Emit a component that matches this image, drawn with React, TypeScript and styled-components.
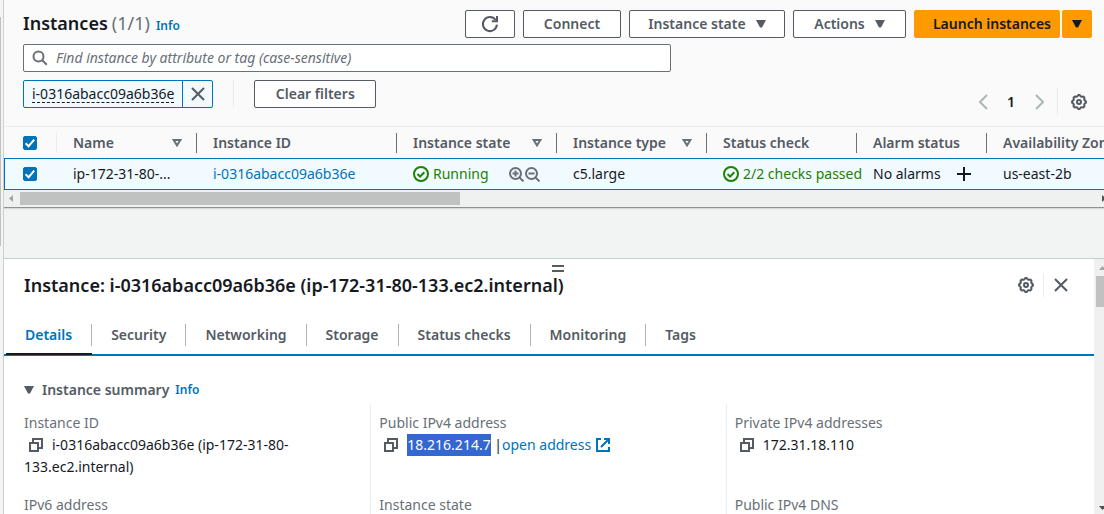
import React from "react";
import styled, { createGlobalStyle } from "styled-components";

const GlobalStyle = createGlobalStyle`
  *, *::before, *::after { box-sizing: border-box; }
  body {
    margin: 0;
    background: #fafafa;
    color: #16191f;
    font-family: "Noto Sans", "Open Sans", sans-serif;
    font-size: 14px;
    line-height: 22px;
  }
  button, input { font: inherit; color: inherit; }
  h1, h2, h3, dl, dd { margin: 0; font-size: inherit; }
  svg { display: block; flex: none; }
`;

const Page = styled.div`
  display: flex;
  height: 100vh;
  overflow: hidden;
`;

const PageEdge = styled.div`
  flex: none;
  width: 3px;
  padding-top: 17px;
  background: #f4f4f4;
`;

const PageEdgeThumb = styled.div`
  width: 1px;
  height: 229px;
  background: #c1c1c1;
`;

const Main = styled.main`
  flex: 1;
  min-width: 0;
  display: flex;
  flex-direction: column;
  border-left: 1px solid #c9cfcf;
  background: #f2f3f3;
`;

const TableCard = styled.section`
  flex: none;
  background: #fafafa;
  border-bottom: 1px solid #879596;
  box-shadow: 0 1px 1px #d5dbdb;
`;

const Toolbar = styled.header`
  padding: 10px 12px 6px 19px;
  display: flex;
  justify-content: space-between;
  align-items: center;
`;

const Title = styled.h1`
  display: flex;
  align-items: baseline;
  font-size: 18px;
  font-weight: 600;
`;

const Counter = styled.span`
  margin-left: 4px;
  color: #687078;
  font-weight: 400;
`;

const Link = styled.a`
  color: #0073bb;
  text-decoration: none;
`;

const InfoLink = styled(Link)`
  margin-left: 6px;
  font-size: 12px;
  font-weight: 600;
`;

const Buttons = styled.div`
  display: flex;
  gap: 8px;
`;

const Button = styled.button<{ $width?: number }>`
  display: flex;
  align-items: center;
  justify-content: center;
  gap: 10px;
  height: 28px;
  min-width: ${(p) => (p.$width ? `${p.$width}px` : "0")};
  padding: 0;
  border: 1px solid #545b64;
  border-radius: 2px;
  background: #fff;
  color: #545b64;
  font-weight: 600;
  white-space: nowrap;
`;

const SplitButton = styled.div`
  display: flex;
  gap: 2px;
`;

const PrimaryButton = styled(Button)`
  border-color: #ff9900;
  background: #ff9900;
  color: #16191f;
`;

const LaunchButton = styled(PrimaryButton)`
  justify-content: flex-end;
  padding-right: 8px;
`;

const Filters = styled.div`
  display: flex;
  justify-content: space-between;
  padding: 0 4px 10px 19px;
  border-bottom: 1px solid #eaeded;
`;

const FilterColumn = styled.div`
  flex: 0 1 648px;
  display: flex;
  flex-direction: column;
  gap: 8px;
  padding-bottom: 8px;
`;

const SearchBox = styled.label`
  display: flex;
  align-items: center;
  gap: 8px;
  height: 28px;
  padding: 0 8px;
  border: 1px solid #687078;
  border-radius: 2px;
  background: #fff;
`;

const SearchInput = styled.input`
  flex: 1;
  min-width: 0;
  border: 0;
  padding: 0;
  outline: 0;
  background: transparent;
  &::placeholder {
    color: #687078;
    font-style: italic;
    opacity: 1;
  }
`;

const TokenRow = styled.div`
  display: flex;
  gap: 20px;
`;

const Token = styled.div`
  display: flex;
  height: 28px;
  border: 1px solid #0073bb;
  border-radius: 2px;
  background: #f1faff;
`;

const TokenText = styled.button`
  padding: 0 8px;
  border: 0;
  background: none;
  span {
    display: block;
    line-height: 17px;
    border-bottom: 1px dashed #16191f;
  }
`;

const TokenRemove = styled.button`
  width: 30px;
  display: grid;
  place-items: center;
  padding: 0;
  border: 0;
  border-left: 1px solid #0073bb;
  background: none;
  color: #545b64;
`;

const Divider = styled.div<{ $height: number }>`
  width: 1px;
  height: ${(p) => p.$height}px;
  background: #eaeded;
`;

const Pager = styled.nav`
  align-self: flex-end;
  display: flex;
  align-items: center;
  height: 28px;
  ${Divider} { margin-left: 9px; }
`;

const IconButton = styled.button<{ $width?: number }>`
  display: grid;
  place-items: center;
  width: ${(p) => p.$width ?? 26}px;
  height: 24px;
  padding: 0;
  border: 0;
  background: none;
  color: #545b64;
  &:disabled { color: #aab7b8; }
`;

const PageNumber = styled.button`
  width: 38px;
  padding: 0;
  border: 0;
  background: none;
  font-weight: 600;
`;

const TableScroller = styled.div`
  overflow: hidden;
`;

const Table = styled.table`
  width: 100%;
  min-width: 1160px;
  table-layout: fixed;
  border-collapse: separate;
  border-spacing: 0;
`;

const Th = styled.th`
  height: 31px;
  padding: 0;
  text-align: left;
  color: #545b64;
  font-weight: 600;
  line-height: 20px;
  white-space: nowrap;
`;

const HeadInner = styled.div<{ $light?: boolean }>`
  display: flex;
  align-items: center;
  justify-content: space-between;
  height: 20px;
  padding: 0 14px 0 16px;
  border-right: 1px solid ${(p) => (p.$light ? "#eaeded" : "#687078")};
`;

const Td = styled.td`
  height: 32px;
  padding: 0 0 0 16px;
  border-top: 1px solid #0073bb;
  border-bottom: 1px solid #0073bb;
  background: #f1faff;
  white-space: nowrap;
  &:first-child { border-left: 1px solid #0073bb; }
`;

const CellRow = styled.div<{ $gap: number; $color?: string }>`
  display: flex;
  align-items: center;
  gap: ${(p) => p.$gap}px;
  color: ${(p) => p.$color ?? "inherit"};
`;

const ZoomPair = styled.div`
  display: flex;
  gap: 1px;
  margin-left: 16px;
  color: #687078;
`;

const BareButton = styled.button`
  padding: 0;
  border: 0;
  background: none;
`;

const CheckWrap = styled.label<{ $pad: number }>`
  display: grid;
  width: 14px;
  margin-left: ${(p) => p.$pad}px;
  & > * { grid-area: 1 / 1; }
  svg { pointer-events: none; }
`;

const CheckInput = styled.input`
  appearance: none;
  width: 14px;
  height: 14px;
  margin: 0;
  border: 1px solid #0073bb;
  border-radius: 2px;
  background: #0073bb;
`;

const HScroll = styled.div`
  display: flex;
  align-items: center;
  height: 17px;
  overflow: hidden;
  background: #f0f0f0;
`;

const HThumb = styled.div`
  width: 40%;
  height: 13px;
  background: #c1c1c1;
`;

const HEnd = styled.div`
  width: 2px;
  margin-left: auto;
  overflow: hidden;
`;

const SplitPanel = styled.section`
  flex: 1;
  min-height: 0;
  display: flex;
  margin-top: 50px;
  border-top: 1px solid #c9cfcf;
  background: #fff;
`;

const PanelBody = styled.div`
  flex: 1;
  min-width: 0;
  overflow: hidden;
`;

const HandleRow = styled.div`
  display: flex;
  justify-content: center;
  padding: 6px 0 0 18px;
`;

const Handle = styled.button`
  width: 12px;
  height: 7px;
  padding: 0;
  border: 0;
  border-top: 2px solid #545b64;
  border-bottom: 2px solid #545b64;
  background: none;
`;

const PanelHeader = styled.header`
  display: flex;
  align-items: center;
  justify-content: space-between;
  height: 26px;
  padding: 0 16px 0 20px;
`;

const PanelTitle = styled.h2`
  font-size: 18px;
  font-weight: 600;
  white-space: nowrap;
`;

const PanelActions = styled.div`
  display: flex;
  align-items: center;
`;

const Tabs = styled.div`
  display: flex;
  height: 58px;
  padding: 0 2px;
  border-bottom: 2px solid #0073bb;
`;

const Tab = styled.button<{ $active?: boolean }>`
  display: flex;
  align-items: center;
  padding: 18px 0 0;
  margin-bottom: -1px;
  border: 0;
  border-bottom: 2px solid ${(p) => (p.$active ? "#16191f" : "transparent")};
  background: none;
  color: ${(p) => (p.$active ? "#0073bb" : "#545b64")};
  font-weight: 600;
  white-space: nowrap;
  span {
    padding: 0 19px;
    border-right: 1px solid #aab7b8;
  }
  &:last-child span { border-right: 0; }
`;

const SummaryTitle = styled.h3`
  display: flex;
  align-items: center;
  padding: 23px 20px 3px;
  color: #545b64;
  font-weight: 600;
`;

const SummaryToggle = styled.button`
  display: flex;
  align-items: center;
  gap: 8px;
  padding: 0;
  border: 0;
  background: none;
  font-weight: 600;
`;

const Summary = styled.dl`
  display: grid;
  grid-template-columns: repeat(3, 1fr);
  margin: 0 13px 0 11px;
`;

const Cell = styled.div<{ $first?: boolean }>`
  min-height: 82px;
  padding: 8px;
  border-left: 1px solid ${(p) => (p.$first ? "transparent" : "#eaeded")};
`;

const Term = styled.dt`
  color: #687078;
`;

const Value = styled.dd`
  color: #16191f;
`;

const CopyButton = styled.button`
  display: inline-block;
  vertical-align: -2px;
  margin: 0 9px 0 5px;
  padding: 0;
  border: 0;
  background: none;
  line-height: 0;
  color: #545b64;
`;

const Selected = styled.span`
  display: inline-block;
  background: #3367d1;
  color: #fff;
`;

const OpenLink = styled(Link)`
  svg {
    display: inline-block;
    vertical-align: -2px;
    margin-left: 5px;
  }
`;

const VScroll = styled.div`
  flex: none;
  width: 10px;
  display: flex;
  flex-direction: column;
  overflow: hidden;
  background: #f0f0f0;
`;

const VThumb = styled.div`
  height: 31px;
  margin-left: 2px;
  background: #c1c1c1;
`;

const VEnd = styled.div`
  margin-top: auto;
`;

const CaretDown = () => (
  <svg width="10" height="8" viewBox="0 0 10 8"><path d="M0 0h10L6 7.4H4z" fill="currentColor" /></svg>
);

const SortIcon = () => (
  <svg width="10" height="8" viewBox="0 0 10 8" fill="none" stroke="#687078" strokeWidth="2">
    <path d="M1.6 1h6.8L5 6.4z" />
  </svg>
);

const Refresh = () => (
  <svg width="18" height="18" viewBox="0 0 18 18" fill="none" stroke="currentColor" strokeWidth="2">
    <path d="M15.9 9.6A7 7 0 1 1 14.6 5" />
    <path d="M16 1v5.2h-5.2" />
  </svg>
);

const SearchIcon = () => (
  <svg width="16" height="16" viewBox="0 0 16 16" fill="none" stroke="#687078" strokeWidth="2">
    <circle cx="6.5" cy="6.5" r="5" />
    <path d="M10.2 10.2l4.6 4.6" />
  </svg>
);

const Close = () => (
  <svg width="14" height="14" viewBox="0 0 14 14" fill="none" stroke="currentColor" strokeWidth="2">
    <path d="M1 1l12 12M13 1L1 13" />
  </svg>
);

const Chevron = ({ right }: { right?: boolean }) => (
  <svg width="9" height="16" viewBox="0 0 9 16" fill="none" stroke="currentColor" strokeWidth="2">
    <path d={right ? "M1 1l7 7-7 7" : "M8 1L1 8l7 7"} />
  </svg>
);

const gearPath = (() => {
  const points: string[] = [];
  for (let i = 0; i < 128; i++) {
    const angle = (i / 128) * Math.PI * 2;
    const radius = 6.4 + 0.6 * Math.tanh(2 * Math.cos(angle * 8));
    points.push(`${(8 + radius * Math.cos(angle)).toFixed(2)} ${(8 + radius * Math.sin(angle)).toFixed(2)}`);
  }
  return `M${points.join("L")}Z`;
})();

const Gear = () => (
  <svg width="16" height="16" viewBox="0 0 16 16" fill="none" stroke="currentColor" strokeWidth="2">
    <path d={gearPath} strokeLinejoin="round" />
    <circle cx="8" cy="8" r="2" />
  </svg>
);

const StatusOk = () => (
  <svg width="16" height="16" viewBox="0 0 16 16" fill="none" stroke="#1d8102" strokeWidth="2">
    <circle cx="8" cy="8" r="7" />
    <path d="M4.5 8l2.6 2.6 4.2-4.4" />
  </svg>
);

const Magnifier = ({ plus }: { plus?: boolean }) => (
  <svg width="15" height="15" viewBox="0 0 15 15" fill="none" stroke="currentColor" strokeWidth="2">
    <circle cx="6.5" cy="6.5" r="5.5" />
    <path d="M10.4 10.4l4 4" />
    <path d={plus ? "M3.5 6.5h6M6.5 3.5v6" : "M3.5 6.5h6"} />
  </svg>
);

const Plus = () => (
  <svg width="14" height="14" viewBox="0 0 14 14" fill="none" stroke="#16191f" strokeWidth="2">
    <path d="M7 0v14M0 7h14" />
  </svg>
);

const Copy = () => (
  <svg width="14" height="14" viewBox="0 0 14 14" fill="none" stroke="currentColor" strokeWidth="2">
    <path d="M1 5h8v8H1z" />
    <path d="M4 5V1h9v9H9" />
  </svg>
);

const External = () => (
  <svg width="14" height="14" viewBox="0 0 14 14" fill="none" stroke="currentColor" strokeWidth="2">
    <path d="M5 1H1v12h12V9" />
    <path d="M8 1h5v5M13 1L5 9" />
  </svg>
);

const Checkbox = ({ label, pad }: { label: string; pad: number }) => (
  <CheckWrap $pad={pad}>
    <CheckInput type="checkbox" defaultChecked aria-label={label} />
    <svg width="14" height="14" viewBox="0 0 14 14" fill="none" stroke="#fff" strokeWidth="2">
      <path d="M2.6 7.2l3 3 5.6-6.6" />
    </svg>
  </CheckWrap>
);

const columns = [
  { title: "Name", width: 140, sortable: true },
  { title: "Instance ID", width: 200 },
  { title: "Instance state", width: 160, sortable: true },
  { title: "Instance type", width: 150, sortable: true },
  { title: "Status check", width: 150 },
  { title: "Alarm status", width: 130 },
  { title: "Availability Zone" },
];

const tabs = ["Details", "Security", "Networking", "Storage", "Status checks", "Monitoring", "Tags"];

export default function App() {
  return (
    <Page>
      <GlobalStyle />
      <PageEdge><PageEdgeThumb /></PageEdge>
      <Main>
        <TableCard>
          <Toolbar>
            <Title>
              Instances <Counter>(1/1)</Counter>
              <InfoLink href="#info">Info</InfoLink>
            </Title>
            <Buttons>
              <Button $width={50} aria-label="Refresh"><Refresh /></Button>
              <Button $width={98}>Connect</Button>
              <Button $width={156}>Instance state <CaretDown /></Button>
              <Button $width={113}>Actions <CaretDown /></Button>
              <SplitButton>
                <LaunchButton $width={146}>Launch instances</LaunchButton>
                <PrimaryButton $width={30} aria-label="More launch options"><CaretDown /></PrimaryButton>
              </SplitButton>
            </Buttons>
          </Toolbar>
          <Filters>
            <FilterColumn>
              <SearchBox>
                <SearchIcon />
                <SearchInput
                  type="text"
                  aria-label="Find instance"
                  placeholder="Find instance by attribute or tag (case-sensitive)"
                />
              </SearchBox>
              <TokenRow>
                <Token>
                  <TokenText><span>i-0316abacc09a6b36e</span></TokenText>
                  <TokenRemove aria-label="Remove filter"><Close /></TokenRemove>
                </Token>
                <Divider $height={28} />
                <Button $width={122}>Clear filters</Button>
              </TokenRow>
            </FilterColumn>
            <Pager aria-label="Pagination">
              <IconButton $width={18} disabled aria-label="Previous page"><Chevron /></IconButton>
              <PageNumber>1</PageNumber>
              <IconButton $width={18} disabled aria-label="Next page"><Chevron right /></IconButton>
              <Divider $height={28} />
              <IconButton $width={42} aria-label="Preferences"><Gear /></IconButton>
            </Pager>
          </Filters>
          <TableScroller>
            <Table>
              <colgroup>
                <col width={53} />
                {columns.map((c) => <col key={c.title} width={c.width} />)}
              </colgroup>
              <thead>
                <tr>
                  <Th>
                    <HeadInner $light><Checkbox label="Select all instances" pad={3} /></HeadInner>
                  </Th>
                  {columns.map((c) => (
                    <Th key={c.title}>
                      <HeadInner>{c.title}{c.sortable && <SortIcon />}</HeadInner>
                    </Th>
                  ))}
                </tr>
              </thead>
              <tbody>
                <tr>
                  <Td><Checkbox label="Select instance" pad={2} /></Td>
                  <Td>ip-172-31-80-...</Td>
                  <Td><Link href="#instance">i-0316abacc09a6b36e</Link></Td>
                  <Td>
                    <CellRow $gap={4} $color="#1d8102">
                      <StatusOk />Running
                      <ZoomPair>
                        <BareButton aria-label="Filter in"><Magnifier plus /></BareButton>
                        <BareButton aria-label="Filter out"><Magnifier /></BareButton>
                      </ZoomPair>
                    </CellRow>
                  </Td>
                  <Td>c5.large</Td>
                  <Td><CellRow $gap={4} $color="#1d8102"><StatusOk />2/2 checks passed</CellRow></Td>
                  <Td>
                    <CellRow $gap={16}>
                      No alarms
                      <BareButton aria-label="Add alarm"><Plus /></BareButton>
                    </CellRow>
                  </Td>
                  <Td>us-east-2b</Td>
                </tr>
              </tbody>
            </Table>
          </TableScroller>
          <HScroll>
            <svg width="16" height="17" viewBox="0 0 16 17"><path d="M9 5v7L5 8.5z" fill="#a3a3a3" /></svg>
            <HThumb />
            <HEnd><svg width="17" height="17" viewBox="0 0 17 17"><path d="M0 5v7l4-3.5z" fill="#505050" /></svg></HEnd>
          </HScroll>
        </TableCard>

        <SplitPanel>
          <PanelBody>
            <HandleRow><Handle aria-label="Resize panel" /></HandleRow>
            <PanelHeader>
              <PanelTitle>Instance: i-0316abacc09a6b36e (ip-172-31-80-133.ec2.internal)</PanelTitle>
              <PanelActions>
                <IconButton $width={34} aria-label="Panel preferences"><Gear /></IconButton>
                <Divider $height={24} />
                <IconButton $width={34} aria-label="Close panel"><Close /></IconButton>
              </PanelActions>
            </PanelHeader>
            <Tabs role="tablist">
              {tabs.map((name, i) => (
                <Tab key={name} role="tab" aria-selected={i === 0} $active={i === 0}><span>{name}</span></Tab>
              ))}
            </Tabs>
            <SummaryTitle>
              <SummaryToggle aria-expanded><CaretDown />Instance summary</SummaryToggle>
              <InfoLink href="#summary-info">Info</InfoLink>
            </SummaryTitle>
            <Summary>
              <Cell $first>
                <Term>Instance ID</Term>
                <Value>
                  <CopyButton aria-label="Copy instance ID"><Copy /></CopyButton>
                  i-0316abacc09a6b36e (ip-172-31-80-133.ec2.internal)
                </Value>
              </Cell>
              <Cell>
                <Term>Public IPv4 address</Term>
                <Value>
                  <CopyButton aria-label="Copy public IPv4 address"><Copy /></CopyButton>
                  <Selected>18.216.214.7</Selected> |<OpenLink href="#open">open address<External /></OpenLink>
                </Value>
              </Cell>
              <Cell>
                <Term>Private IPv4 addresses</Term>
                <Value>
                  <CopyButton aria-label="Copy private IPv4 address"><Copy /></CopyButton>
                  172.31.18.110
                </Value>
              </Cell>
              <Cell $first><Term>IPv6 address</Term></Cell>
              <Cell><Term>Instance state</Term></Cell>
              <Cell><Term>Public IPv4 DNS</Term></Cell>
            </Summary>
          </PanelBody>
          <VScroll>
            <svg width="17" height="17" viewBox="0 0 17 17"><path d="M5 11h7L8.5 7z" fill="#a3a3a3" /></svg>
            <VThumb />
            <VEnd><svg width="17" height="12" viewBox="0 0 17 12"><path d="M5 4h7L8.5 8z" fill="#505050" /></svg></VEnd>
          </VScroll>
        </SplitPanel>
      </Main>
    </Page>
  );
}
